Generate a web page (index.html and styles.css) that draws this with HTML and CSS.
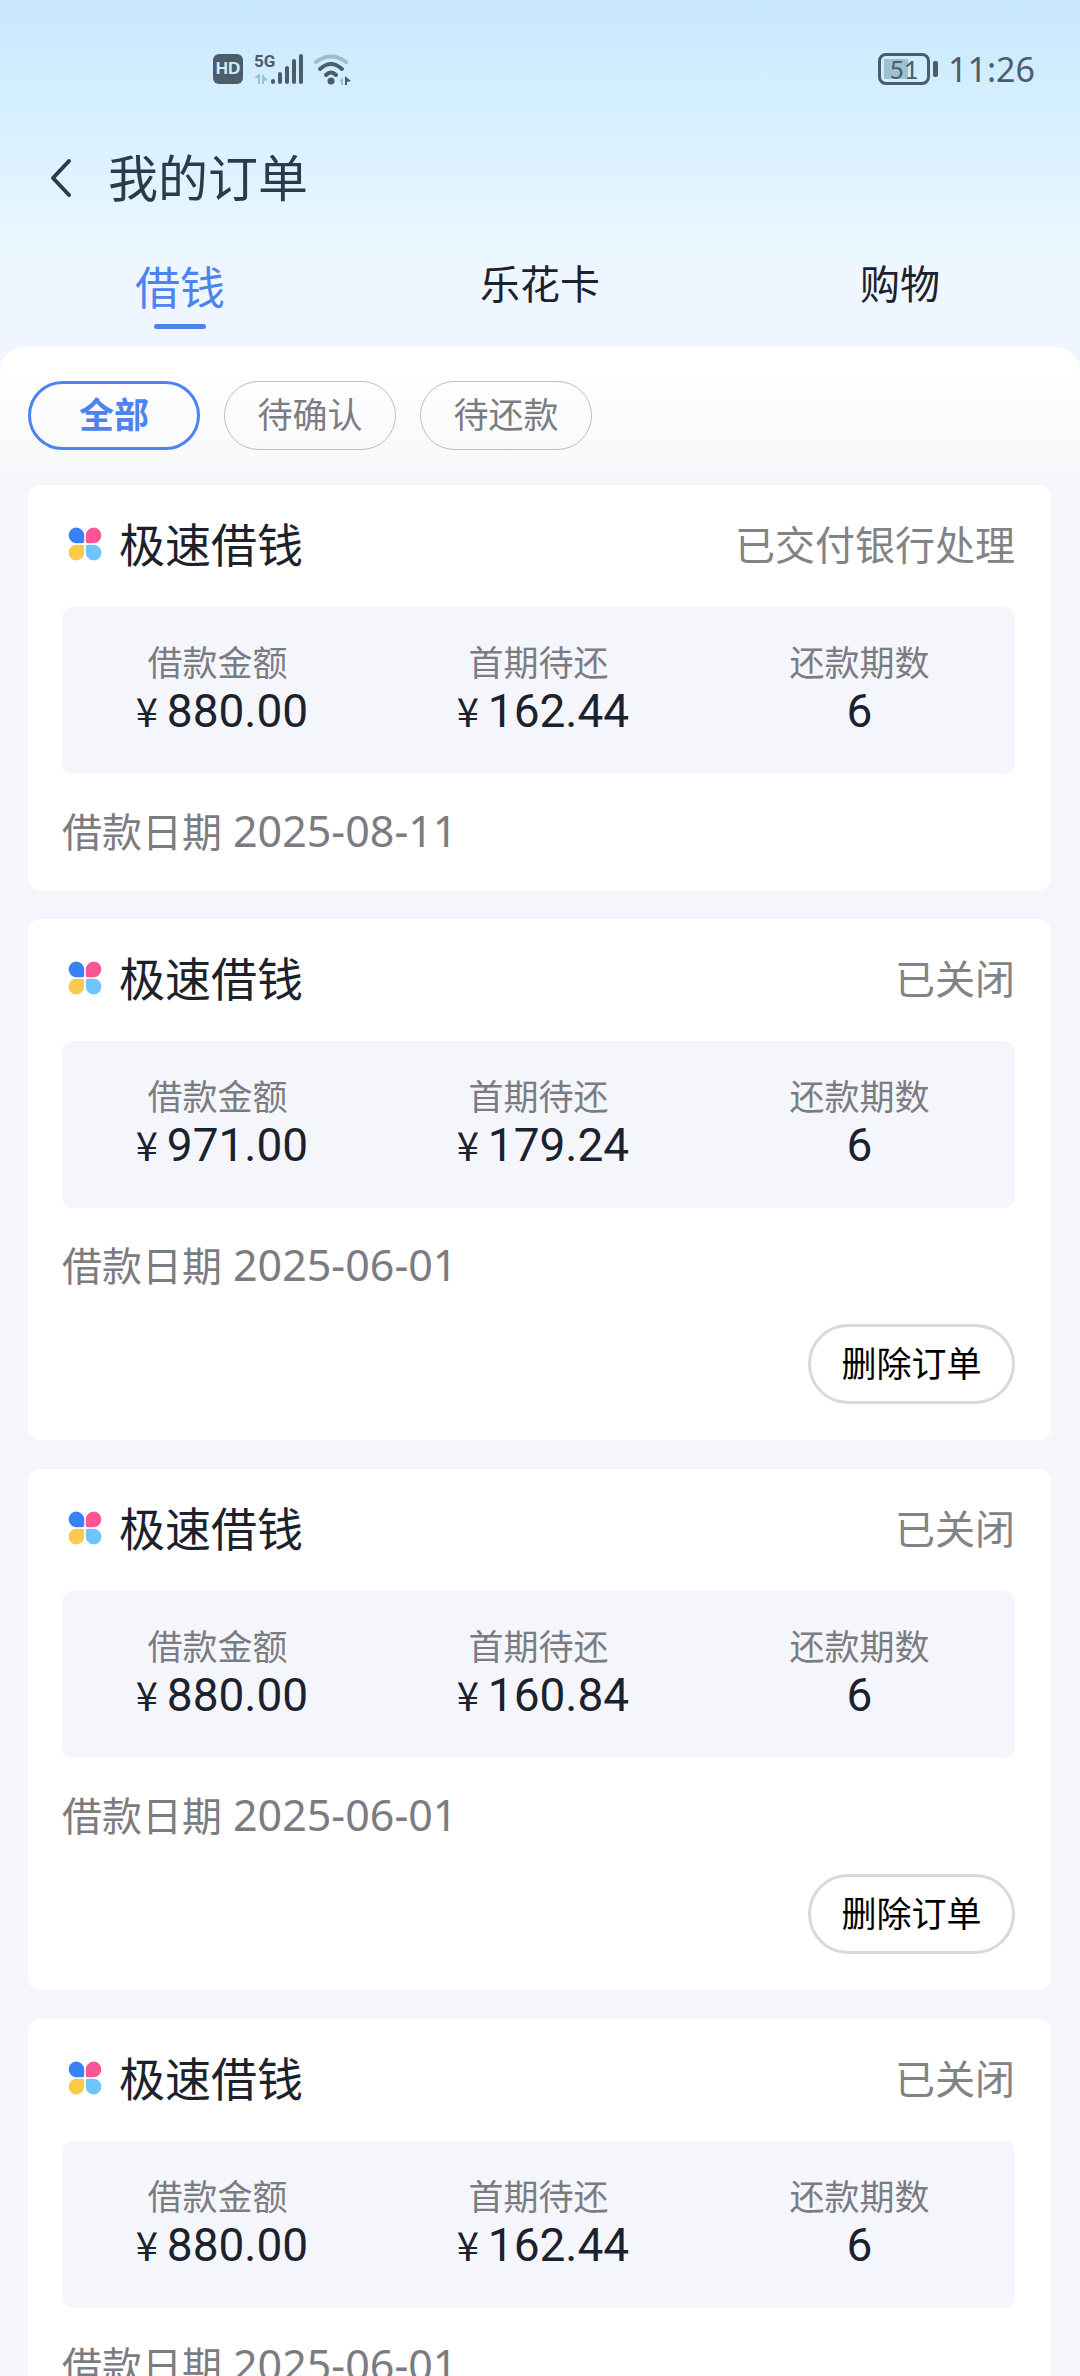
FILE: index.html
```
<!DOCTYPE html>
<html lang="zh-CN">
<head>
    <meta charset="UTF-8">
    <meta name="viewport" content="width=device-width, initial-scale=1.0">
    <title>我的订单</title>
    <link rel="stylesheet" href="styles.css">
</head>
<body>
    <!-- Shared logo -->
    <svg class="sprite" aria-hidden="true">
        <symbol id="logo" viewBox="0 0 34 34">
            <path fill="#3a80f7" d="M8.500 0.500a8 8 0 0 1 7.700 8V14.500a1.700 1.700 0 0 1-1.700 1.700H8.500A7.850 7.850 0 0 1 8.500 0.500z"/>
            <path fill="#fa5594" d="M25.500 0.500a8 8 0 0 0-7.700 8V14.500a1.700 1.700 0 0 0 1.700 1.700H25.500A7.850 7.850 0 0 0 25.500 0.500z"/>
            <path fill="#fcc94f" d="M8.500 33.500a8 8 0 0 0 7.700-8V19.500a1.700 1.700 0 0 0-1.700-1.700H8.500A7.850 7.850 0 0 0 8.500 33.500z"/>
            <path fill="#6ec5fb" d="M25.500 33.500a8 8 0 0 1-7.700-8V19.500a1.700 1.700 0 0 1 1.700-1.700H25.500A7.850 7.850 0 0 1 25.500 33.500z"/>
        </symbol>
    </svg>

    <div class="page">
        <header class="header">
            <!-- Phone status bar -->
            <div class="status-bar">
                <div class="status-left">
                    <span class="hd">HD</span>
                    <svg class="signal" width="50" height="34" viewBox="0 0 50 34" aria-label="5G">
                        <text x="0" y="15" class="signal-label">5G</text>
                        <path fill="#a0bfcf" d="M4 32V26H0l6-5v11zM8 22l6 6-4 1v3H8z"/>
                        <g stroke="#4b5d69" stroke-width="4" stroke-linecap="round">
                            <path d="M19 30v-1M26 30v-8M33 30V16M40 30V9M47 30V4"/>
                        </g>
                    </svg>
                    <svg class="wifi" width="40" height="34" viewBox="0 0 40 34" aria-label="WiFi">
                        <g fill="none" stroke-width="4" stroke-linecap="round">
                            <path stroke="#9dbccc" d="M3 10q15-11 30 0"/>
                            <path stroke="#4b5d69" d="M7 17q11-10 22 0M13 23q5-5 10 0"/>
                        </g>
                        <circle cx="18" cy="29" r="3.5" fill="#4b5d69"/>
                        <path fill="#9dbccc" d="M30 33h-2v-4h-2l4-4z"/>
                        <path fill="#4b5d69" d="M32 24l6 5-4 1v3h-2z"/>
                    </svg>
                </div>
                <div class="status-right">
                    <div class="battery"><span class="battery-level">51</span></div>
                    <span class="time">11:26</span>
                </div>
            </div>

            <div class="title-bar">
                <button class="back" aria-label="返回">
                    <svg width="22" height="40" viewBox="0 0 22 40"><path d="M19 3L3 20l16 17" fill="none" stroke="#2b3b49" stroke-width="4" stroke-linecap="round" stroke-linejoin="round"/></svg>
                </button>
                <h1>我的订单</h1>
            </div>

            <nav class="tabs">
                <a href="#" class="tab active">借钱</a>
                <a href="#" class="tab">乐花卡</a>
                <a href="#" class="tab">购物</a>
            </nav>
        </header>

        <main class="content">
            <div class="filters">
                <button class="filter active">全部</button>
                <button class="filter">待确认</button>
                <button class="filter">待还款</button>
            </div>

            <div class="orders">
                <section class="card">
                    <div class="card-head">
                        <svg class="logo"><use href="#logo"/></svg>
                        <h2>极速借钱</h2>
                        <span class="state">已交付银行处理</span>
                    </div>
                    <div class="summary">
                        <dl>
                            <div><dt>借款金额</dt><dd><span class="yen">¥</span>880.00</dd></div>
                            <div><dt>首期待还</dt><dd><span class="yen">¥</span>162.44</dd></div>
                            <div><dt>还款期数</dt><dd>6</dd></div>
                        </dl>
                    </div>
                    <p class="date">借款日期 <time>2025-08-11</time></p>
                </section>

                <section class="card">
                    <div class="card-head">
                        <svg class="logo"><use href="#logo"/></svg>
                        <h2>极速借钱</h2>
                        <span class="state">已关闭</span>
                    </div>
                    <div class="summary">
                        <dl>
                            <div><dt>借款金额</dt><dd><span class="yen">¥</span>971.00</dd></div>
                            <div><dt>首期待还</dt><dd><span class="yen">¥</span>179.24</dd></div>
                            <div><dt>还款期数</dt><dd>6</dd></div>
                        </dl>
                    </div>
                    <p class="date">借款日期 <time>2025-06-01</time></p>
                    <div class="actions"><button class="delete">删除订单</button></div>
                </section>

                <section class="card">
                    <div class="card-head">
                        <svg class="logo"><use href="#logo"/></svg>
                        <h2>极速借钱</h2>
                        <span class="state">已关闭</span>
                    </div>
                    <div class="summary">
                        <dl>
                            <div><dt>借款金额</dt><dd><span class="yen">¥</span>880.00</dd></div>
                            <div><dt>首期待还</dt><dd><span class="yen">¥</span>160.84</dd></div>
                            <div><dt>还款期数</dt><dd>6</dd></div>
                        </dl>
                    </div>
                    <p class="date">借款日期 <time>2025-06-01</time></p>
                    <div class="actions"><button class="delete">删除订单</button></div>
                </section>

                <section class="card">
                    <div class="card-head">
                        <svg class="logo"><use href="#logo"/></svg>
                        <h2>极速借钱</h2>
                        <span class="state">已关闭</span>
                    </div>
                    <div class="summary">
                        <dl>
                            <div><dt>借款金额</dt><dd><span class="yen">¥</span>880.00</dd></div>
                            <div><dt>首期待还</dt><dd><span class="yen">¥</span>162.44</dd></div>
                            <div><dt>还款期数</dt><dd>6</dd></div>
                        </dl>
                    </div>
                    <p class="date">借款日期 <time>2025-06-01</time></p>
                </section>
            </div>
        </main>
    </div>
</body>
</html>
```

FILE: styles.css
```
* {
    box-sizing: border-box;
}

body {
    margin: 0;
    font-family: "Noto Sans CJK SC", sans-serif;
    color: #1b222d;
}

h1, h2, p, dl, dd {
    margin: 0;
    font-weight: normal;
}

button {
    padding: 0;
    font-family: inherit;
    background: none;
    border: none;
    cursor: pointer;
}

.sprite {
    display: none;
}

/* One screen, the list runs on below the fold */
.page {
    height: 100vh;
    overflow: hidden;
    background: linear-gradient(#c8e8ff 0, #d6f0ff 120px, #eaf8ff 250px, #eff6ff 270px);
}

/* Status bar */
.status-bar {
    display: flex;
    justify-content: space-between;
    align-items: center;
    height: 138px;
    padding: 0 45px 0 213px;
    color: #4b5d69;
}

.status-left, .status-right {
    display: flex;
    align-items: center;
}

.hd {
    width: 30px;
    height: 30px;
    margin-right: 11px;
    border-radius: 6px;
    background: #4b5d69;
    color: #d3edfd;
    font: bold 17px/30px "Liberation Sans", sans-serif;
    text-align: center;
}

.signal {
    overflow: visible;
}

.signal-label {
    font: bold 17px "Liberation Sans Narrow", Roboto, sans-serif;
    fill: #4b5d69;
}

.wifi {
    margin-left: 9px;
}

.battery {
    position: relative;
    width: 52px;
    height: 32px;
    margin-right: 18px;
    padding: 3px;
    border: 3px solid #4b5d69;
    border-radius: 8px;
}

.battery::after {
    content: "";
    position: absolute;
    top: 5px;
    right: -11px;
    width: 5px;
    height: 16px;
    border-radius: 2px;
    background: #4b5d69;
}

.battery-level {
    display: block;
    height: 20px;
    background: linear-gradient(90deg, #9fbfd2 60%, transparent 60%);
    font: 25px/20px Lato, sans-serif;
    text-align: center;
}

.time {
    font: 34px/40px "Noto Sans", sans-serif;
}

/* Title */
.title-bar {
    display: flex;
    align-items: center;
    gap: 36px;
    height: 80px;
    padding-left: 50px;
}

.back {
    display: flex;
}

.title-bar h1 {
    padding-bottom: 6px;
    color: #2b3b49;
    font-size: 50px;
    line-height: 72px;
}

/* Tabs */
.tabs {
    display: flex;
    height: 129px;
    padding-top: 34px;
}

.tab {
    display: flex;
    flex: 1;
    flex-direction: column;
    align-items: center;
    color: #1b222d;
    font-size: 40px;
    line-height: 60px;
    text-decoration: none;
}

.tab.active {
    color: #4d83ee;
    font-size: 45px;
    line-height: 68px;
}

.tab.active::after {
    content: "";
    width: 52px;
    height: 5px;
    margin-top: 4px;
    border-radius: 3px;
    background: #4d83ee;
}

/* Sheet */
.content {
    border-radius: 24px 24px 0 0;
    background: linear-gradient(#fff 0, #fff 20px, #f8f9fb 110px, #f5f6fb 138px);
}

.filters {
    display: flex;
    gap: 24px;
    padding: 34px 28px 35px;
}

.filter {
    width: 172px;
    height: 69px;
    padding-bottom: 5px;
    border: 1px solid #bcbdc1;
    border-radius: 35px;
    color: #7b7c82;
    font-size: 35px;
    line-height: 50px;
}

.filter.active {
    border: 3px solid #4d83ee;
    color: #4d83ee;
    font-weight: bold;
}

/* Orders */
.orders {
    display: flex;
    flex-direction: column;
    gap: 29px;
    padding: 0 29px 28px 28px;
}

.card {
    padding: 0 36px 0 34px;
    border-radius: 12px;
    background: #fff;
}

.card-head {
    display: flex;
    align-items: center;
    height: 122px;
    padding: 0 0 4px 6px;
}

.logo {
    width: 34px;
    height: 34px;
    margin-right: 17px;
}

.card-head h2 {
    padding-bottom: 4px;
    font-size: 46px;
    line-height: 66px;
}

.state {
    margin-left: auto;
    padding-bottom: 2px;
    color: #828385;
    font-size: 40px;
    line-height: 60px;
}

.summary {
    padding: 30px 0 37px;
    border-radius: 10px;
    background: #f5f6fb;
}

.summary dl {
    display: grid;
    grid-template-columns: repeat(3, 1fr);
    margin: 0 -5px;
    text-align: center;
}

.summary dt {
    color: #7b7c82;
    font-size: 35px;
    line-height: 48px;
}

.summary dd {
    font: 46px/52px Roboto, sans-serif;
}

.yen {
    display: inline-block;
    width: 40px;
    font-family: "Noto Sans CJK SC", sans-serif;
    font-size: 40px;
    line-height: 40px;
    text-align: center;
}

.date {
    padding-bottom: 4px;
    color: #7b7c82;
    font-size: 40px;
    line-height: 112px;
}

.date time {
    margin-left: 2px;
    font-family: "Noto Sans", sans-serif;
    font-size: 43px;
    line-height: 60px;
}

.actions {
    display: flex;
    justify-content: flex-end;
    padding-bottom: 36px;
}

.delete {
    width: 207px;
    height: 80px;
    padding-bottom: 5px;
    border: 3px solid #d9d9d9;
    border-radius: 40px;
    color: #000;
    font-size: 35px;
    line-height: 50px;
}
```
